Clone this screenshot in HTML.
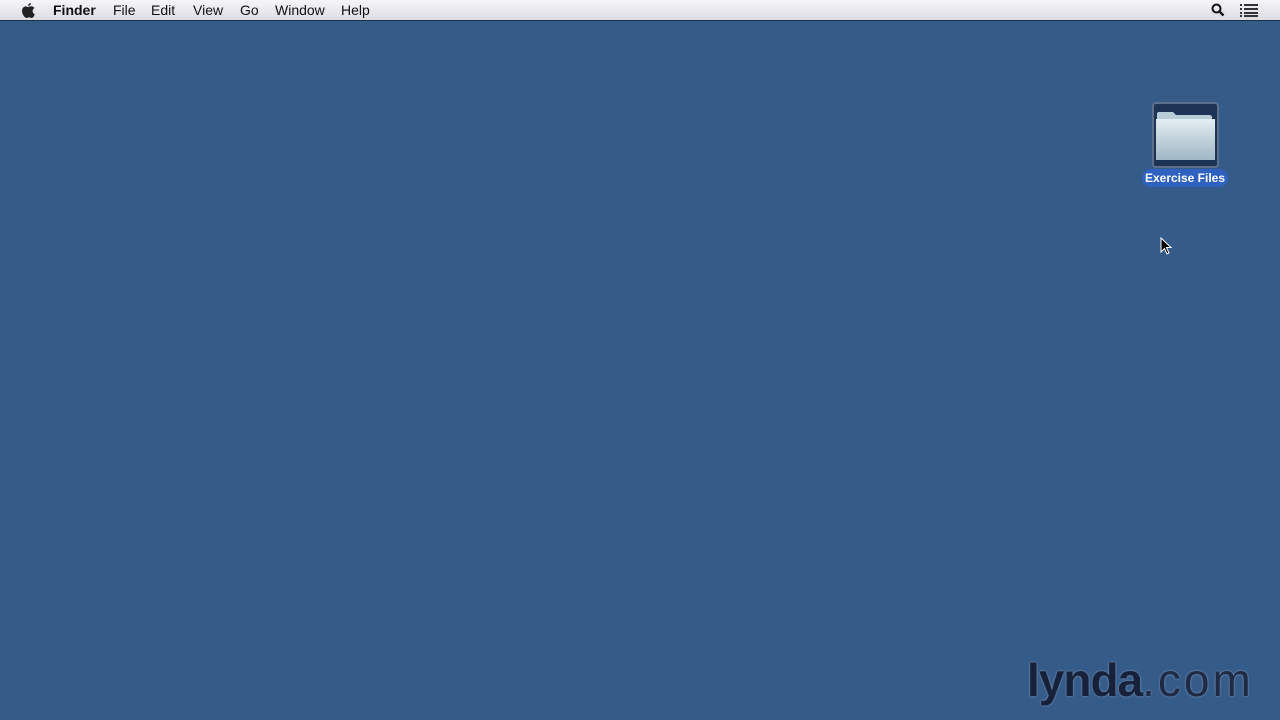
<!DOCTYPE html>
<html><head><style>
*{margin:0;padding:0;box-sizing:border-box}
body{width:1280px;height:720px;overflow:hidden;background:#355b89;font-family:"Liberation Sans",sans-serif;position:relative}
#bar{position:absolute;left:0;top:0;width:1280px;height:21px;background:linear-gradient(#f6f6f8,#dcdde3);border-bottom:1px solid #1e2f48;}
#bar span{position:absolute;top:2px;font-size:14px;color:#111}
.icon{position:absolute;left:1152px;top:102px;width:67px;height:66px;background:#1e3456;border:2px solid #5d6f8a;border-radius:4px}
.lbl{position:absolute;left:1142px;top:169px;width:86px;height:18px;background:#2f62c0;border-radius:9px;color:#fff;font-size:12px;font-weight:bold;text-align:center;line-height:18px}
.logo{position:absolute;left:1027px;top:654px;font-size:46px;line-height:52px;color:#17223a;text-shadow:0 0 2px #8aa0c0;white-space:nowrap}
</style></head><body>
<div id="bar">
<svg style="position:absolute;left:20px;top:2px" width="16" height="17" viewBox="0 0 16 17"><path d="M11 1c0 1.5-1.2 3-2.8 3C8 2.5 9.4 1.1 11 1z M8 5c1-0 2-.8 3.2-.8 1.3 0 2.5.7 3.2 1.8-2.6 1.5-2.2 5.3.4 6.3-.6 1.7-1.7 3.7-3 3.7-1 0-1.4-.6-2.6-.6S7.5 16 6.6 16C5 16 2 12.5 2 9c0-2.8 1.8-4.6 3.7-4.6C6.8 4.4 7.3 5 8 5z" fill="#222"/></svg>
<span style="left:53px;font-weight:bold">Finder</span>
<span style="left:113px">File</span>
<span style="left:151px">Edit</span>
<span style="left:193px">View</span>
<span style="left:240px">Go</span>
<span style="left:275px">Window</span>
<span style="left:341px">Help</span>
<svg style="position:absolute;left:1211px;top:3px" width="14" height="14" viewBox="0 0 14 14"><circle cx="5.5" cy="5.5" r="4" fill="none" stroke="#111" stroke-width="2"/><path d="M8.5 8.5L12.5 12.5" stroke="#111" stroke-width="2.4"/></svg>
<svg style="position:absolute;left:1240px;top:3px" width="18" height="14" viewBox="0 0 18 14"><g fill="#333"><rect x="0" y="1" width="2" height="2"/><rect x="4" y="1" width="14" height="2"/><rect x="0" y="5" width="2" height="2"/><rect x="4" y="5" width="14" height="2"/><rect x="0" y="9" width="2" height="2"/><rect x="4" y="9" width="14" height="2"/><rect x="0" y="12" width="2" height="2"/><rect x="4" y="12" width="14" height="2"/></g></svg>
</div>
<div class="icon">
<svg width="63" height="62" viewBox="0 0 63 62"><path d="M3 10q0-2 2-2h14l3 3h33q3 0 3 2v42H3z" fill="#b8cdd8"/><path d="M2 15h59v41H2z" fill="url(#g)"/><defs><linearGradient id="g" x1="0" y1="0" x2="0" y2="1"><stop offset="0" stop-color="#e4edf2"/><stop offset="1" stop-color="#9fb7c6"/></linearGradient></defs></svg>
</div>
<div class="lbl">Exercise Files</div>
<svg style="position:absolute;left:1160px;top:237px" width="12" height="18" viewBox="0 0 12 18"><path d="M1 1v14l3.5-3.5 2.5 5.5 2-1-2.5-5.5H11z" fill="#000" stroke="#fff" stroke-width="1"/></svg>
<div class="logo"><b style="letter-spacing:-1px">lynda</b><span style="color:#1f2b44;letter-spacing:3px">.com</span></div>
</body></html>
